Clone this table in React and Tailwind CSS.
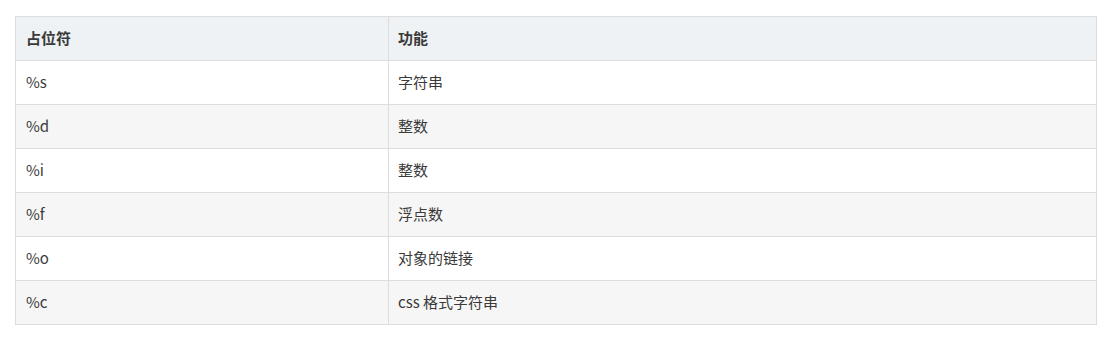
const rows = [
  ['%s', '字符串'],
  ['%d', '整数'],
  ['%i', '整数'],
  ['%f', '浮点数'],
  ['%o', '对象的链接'],
  ['%c', 'css 格式字符串'],
]

export default function App() {
  return (
    <div className="bg-white px-[15px] pt-[16px] h-[345px]" style={{ fontFamily: '"Microsoft YaHei", "Noto Sans CJK SC", sans-serif' }}>
      <table className="w-[1082px] border-collapse text-[15px] text-[#3a3a3a]">
        <thead>
          <tr className="bg-[#eef2f5]">
            <th className="w-[373px] h-[44px] border border-[#ddd] pl-[10px] text-left font-bold">占位符</th>
            <th className="h-[44px] border border-[#ddd] pl-[9px] text-left font-bold">功能</th>
          </tr>
        </thead>
        <tbody>
          {rows.map(([a, b], i) => (
            <tr key={a} className={i % 2 === 0 ? 'bg-white' : 'bg-[#f6f6f6]'}>
              <td className="h-[44px] border border-[#ddd] pl-[10px]">{a}</td>
              <td className="h-[44px] border border-[#ddd] pl-[9px]">{b}</td>
            </tr>
          ))}
        </tbody>
      </table>
    </div>
  )
}
